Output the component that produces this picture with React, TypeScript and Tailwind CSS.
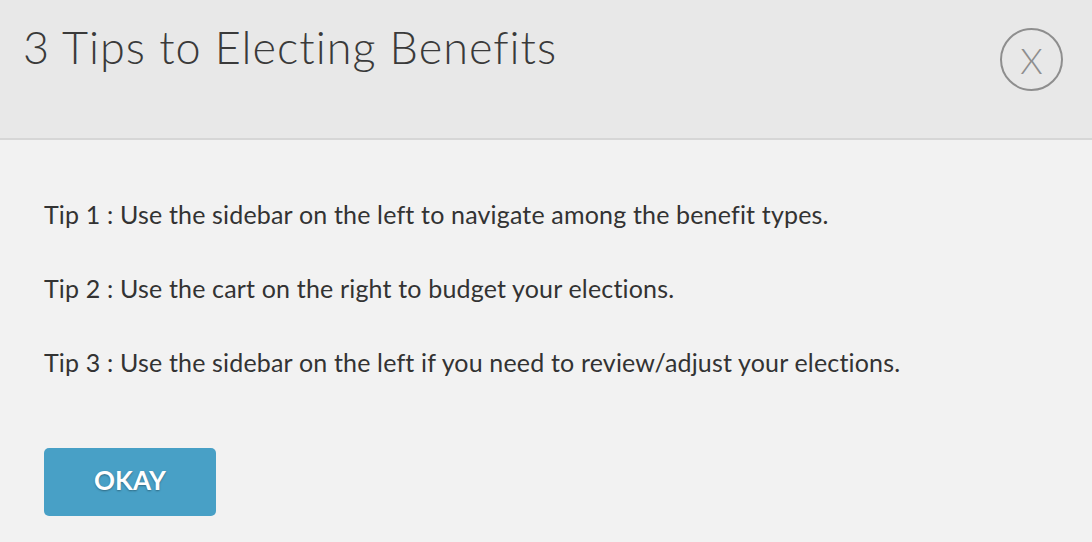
export default function App() {
  return (
    <div className="w-[1092px] h-[542px] flex flex-col bg-[#f2f2f2] text-[#333333]" style={{ fontFamily: "Lato, 'Noto Sans', sans-serif" }}>
      <div className="h-[140px] shrink-0 bg-[#e8e8e8] border-b-2 border-[#d6d6d6] flex items-start justify-between pl-[23px] pr-[29px]">
        <h1 className="mt-[19px] text-[45px] font-light leading-[56px] tracking-[1px] text-[#3a3a3a]">3 Tips to Electing Benefits</h1>
        <button className="mt-[28px] w-[63px] h-[63px] rounded-full border-2 border-[#8e8e8e] flex items-center justify-center text-[#8e8e8e] text-[36px] font-light leading-none">
          X
        </button>
      </div>
      <div className="flex flex-col pl-[44px] pt-[58px]">
        <p className="text-[25px] leading-[32px] tracking-[0.17px] text-[#333333]">Tip 1 : Use the sidebar on the left to navigate among the benefit types.</p>
        <p className="mt-[42px] text-[25px] leading-[32px] tracking-[0.17px] text-[#333333]">Tip 2 : Use the cart on the right to budget your elections.</p>
        <p className="mt-[42px] text-[25px] leading-[32px] tracking-[0.17px] text-[#333333]">Tip 3 : Use the sidebar on the left if you need to review/adjust your elections.</p>
        <button className="mt-[70px] w-[172px] h-[68px] pb-[3px] rounded-[5px] bg-[#48a0c6] text-white text-[26px] font-bold [text-shadow:0_1px_2px_rgba(0,0,0,0.35)]">
          OKAY
        </button>
      </div>
    </div>
  );
}
